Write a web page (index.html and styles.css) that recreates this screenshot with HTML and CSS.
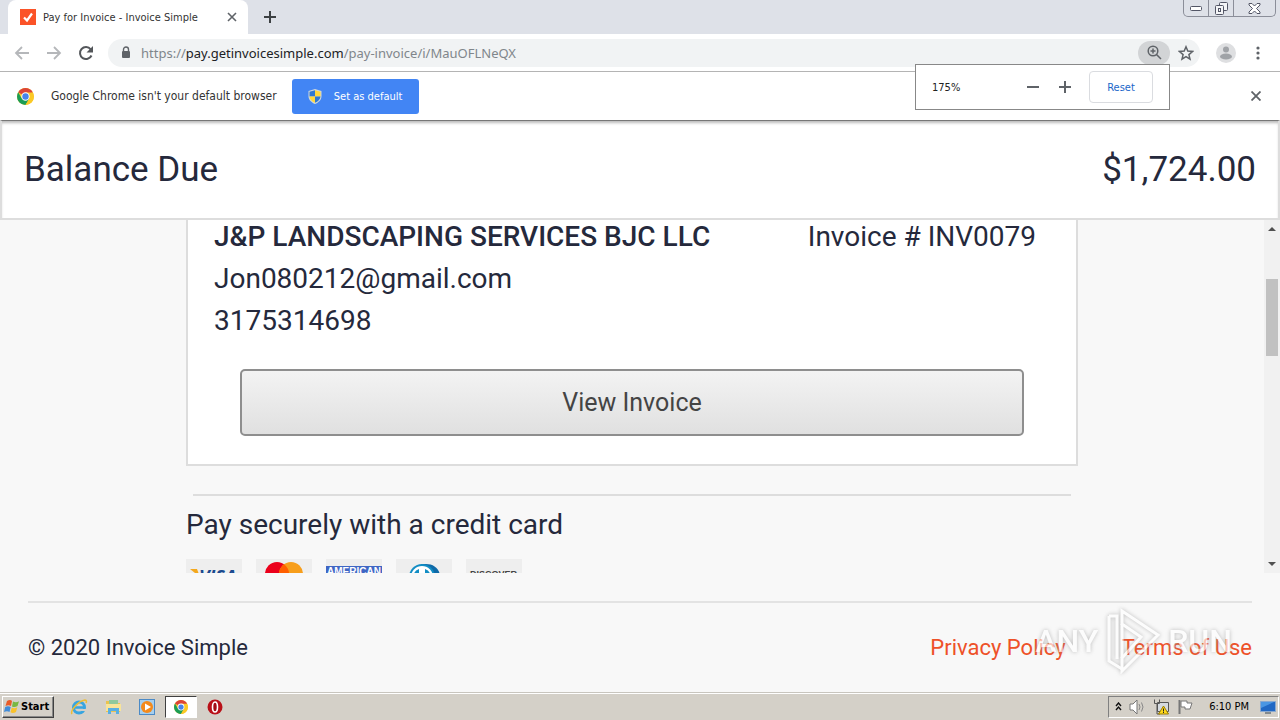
FILE: index.html
```html
<!DOCTYPE html>
<html lang="en">
<head>
    <meta charset="UTF-8">
    <meta name="viewport" content="width=device-width, initial-scale=1.0">
    <title>Pay for Invoice - Invoice Simple</title>
    <link rel="stylesheet" href="styles.css">
</head>
<body>
    <!-- shared logo -->
    <svg class="defs" width="0" height="0" aria-hidden="true">
        <symbol id="chrome" viewBox="0 0 16 16">
            <circle cx="8" cy="8" r="8" fill="#fbc926"/>
            <path d="M8 8L1.1 4A8 8 0 0 1 14.9 4z" fill="#dc4437"/>
            <path d="M8 8L4.6 10 1.1 4A8 8 0 0 0 8 16l3.5-6z" fill="#1b9d55"/>
            <path d="M8 4.200h6.900A8 8 0 0 1 8 16l3.500-6z" fill="#fbc926"/>
            <circle cx="8" cy="8" r="3.900" fill="#fff"/>
            <circle cx="8" cy="8" r="3" fill="#4683ea"/>
        </symbol>
    </svg>

    <div class="tabs">
        <div class="tab">
            <svg width="16" height="16" viewBox="0 0 16 16"><path d="M0 0h16v16H0z" fill="#fb5328"/><path d="M4 8.500l3 3 5-7" fill="none" stroke="#fff" stroke-width="2.200"/></svg>
            <span class="tab-title">Pay for Invoice - Invoice Simple</span>
            <button class="icon-btn" aria-label="Close tab"><svg width="10" height="10" viewBox="0 0 10 10"><path d="M1 1l8 8M9 1L1 9" stroke="#5f6368" stroke-width="1.600"/></svg></button>
        </div>
        <button class="icon-btn new-tab" aria-label="New tab"><svg width="12" height="12" viewBox="0 0 12 12"><path d="M6 0v12M0 6h12" stroke="#3c4043" stroke-width="2"/></svg></button>
        <div class="win">
            <button aria-label="Minimize"><svg width="12" height="5" viewBox="0 0 12 5"><rect x=".5" y=".5" width="11" height="4" rx="1" fill="#fff" stroke="#535666"/></svg></button>
            <button aria-label="Restore"><svg width="13" height="13" viewBox="0 0 13 13" fill="#f4f5f7" stroke="#535666"><rect x="4.500" y=".5" width="8" height="8" rx="1"/><rect x=".5" y="3.500" width="8" height="9" rx="1"/><rect x="3.500" y="6.500" width="2" height="3"/></svg></button>
            <button class="win-close" aria-label="Close"><svg width="13" height="11" viewBox="0 0 13 11"><path d="M1 .5h3l2.500 2.500L9 .5h3v1.500L8.500 5.500 12 9v1.500H9L6.500 8 4 10.500H1V9l3.500-3.500L1 2z" fill="#fff" stroke="#535666"/></svg></button>
        </div>
    </div>

    <div class="toolbar">
        <button class="icon-btn" aria-label="Back"><svg width="16" height="14" viewBox="0 0 16 14"><path d="M15 7H2M8 1L2 7l6 6" fill="none" stroke="#b5b7ba" stroke-width="1.800"/></svg></button>
        <button class="icon-btn" aria-label="Forward"><svg width="16" height="14" viewBox="0 0 16 14"><path d="M1 7h13M8 1l6 6-6 6" fill="none" stroke="#b5b7ba" stroke-width="1.800"/></svg></button>
        <button class="icon-btn" aria-label="Reload"><svg width="16" height="16" viewBox="0 0 16 16"><path d="M13.500 10.500a6 6 0 1 1-.8-6.200" fill="none" stroke="#54575b" stroke-width="2"/><path d="M15 1v6.500H8.500z" fill="#54575b"/></svg></button>
        <div class="address">
            <svg width="10" height="13" viewBox="0 0 10 13"><rect x="1" y="5" width="8" height="7" rx="1" fill="#5f6368"/><path d="M2.500 5V3.500a2.500 2.500 0 0 1 5 0V5" fill="none" stroke="#5f6368" stroke-width="1.400"/></svg>
            <div class="url">https://<b>pay.getinvoicesimple.com</b>/pay-invoice/i/MauOFLNeQX</div>
            <button class="zoom-btn" aria-label="Zoom"><svg width="15" height="15" viewBox="0 0 15 15" fill="none" stroke="#5f6368" stroke-width="1.500"><circle cx="6" cy="6" r="4.800"/><path d="M9.500 9.500L14 14M3.500 6h5M6 3.500v5"/></svg></button>
            <button class="icon-btn" aria-label="Bookmark this page"><svg width="16" height="16" viewBox="0 0 16 16"><path d="M8 1.800l1.800 4.300 4.700.4-3.600 3.100 1.100 4.600L8 11.700l-4 2.500 1.100-4.600-3.600-3.100 4.700-.4z" fill="none" stroke="#5f6368" stroke-width="1.500"/></svg></button>
        </div>
        <button class="icon-btn" aria-label="Profile"><svg width="20" height="20" viewBox="0 0 20 20"><circle cx="10" cy="10" r="10" fill="#dedfe1"/><circle cx="10" cy="6.500" r="3" fill="#a0a3a7"/><ellipse cx="10" cy="13.500" rx="6" ry="3" fill="#a0a3a7"/></svg></button>
        <button class="icon-btn menu" aria-label="Menu"><svg width="4" height="14" viewBox="0 0 4 14" fill="#5f6368"><circle cx="2" cy="2" r="1.600"/><circle cx="2" cy="7" r="1.600"/><circle cx="2" cy="12" r="1.600"/></svg></button>
        <div class="zoom-popup">
            <span class="zoom-value">175%</span>
            <button class="icon-btn" aria-label="Zoom out"><svg width="12" height="12" viewBox="0 0 12 12"><path d="M0 6h12" stroke="#5f6368" stroke-width="2"/></svg></button>
            <button class="icon-btn" aria-label="Zoom in"><svg width="12" height="12" viewBox="0 0 12 12"><path d="M0 6h12M6 0v12" stroke="#5f6368" stroke-width="2"/></svg></button>
            <button class="reset">Reset</button>
        </div>
    </div>

    <div class="infobar">
        <svg width="17" height="17"><use href="#chrome"/></svg>
        <span>Google Chrome isn't your default browser</span>
        <button class="set-default">
            <svg width="14" height="15" viewBox="0 0 14 15"><path d="M7 0l6.500 2v5c0 4-3 6.500-6.500 8C3.500 13.500.5 11 .5 7V2z" fill="#cfd8dc"/><path d="M7 1.200L1.500 2.800V7.500H7z" fill="#2e78d2"/><path d="M7 1.200l5.500 1.600v4.700H7z" fill="#ffd83b"/><path d="M1.500 7.500H7v6.300C4 12.500 1.800 10.500 1.500 7.500z" fill="#ffd83b"/><path d="M12.500 7.500H7v6.300c3-1.300 5.200-3.300 5.500-6.300z" fill="#2e78d2"/></svg>
            Set as default
        </button>
        <button class="icon-btn info-close" aria-label="Dismiss"><svg width="10" height="10" viewBox="0 0 10 10"><path d="M0.500 0.500l9 9M9.500 0.500l-9 9" stroke="#5f6368" stroke-width="1.800"/></svg></button>
    </div>

    <header class="balance">
        <span>Balance Due</span>
        <span>$1,724.00</span>
    </header>

    <main class="viewport">
        <div class="content">
            <section class="card">
                <div class="card-row">
                    <strong>J&amp;P LANDSCAPING SERVICES BJC LLC</strong>
                    <span>Invoice # INV0079</span>
                </div>
                <div>Jon080212@gmail.com</div>
                <div>3175314698</div>
                <button class="view-invoice">View Invoice</button>
            </section>
            <hr class="divider">
            <div>Pay securely with a credit card</div>
            <div class="brands">
                <svg viewBox="0 0 56 36"><path d="M0 0h56v36H0z" fill="#eee"/><path d="M4 10h7l3 8z" fill="#f4a81d"/><text x="13" y="24" class="visa">VISA</text></svg>
                <svg viewBox="0 0 56 36"><path d="M0 0h56v36H0z" fill="#eee"/><circle cx="21" cy="15" r="12" fill="#eb001b"/><circle cx="35" cy="15" r="12" fill="#f79e1b"/><path d="M28 5.200a12 12 0 0 1 0 19.600 12 12 0 0 1 0-19.600z" fill="#ff5f00"/></svg>
                <svg viewBox="0 0 56 36"><path d="M0 0h56v36H0z" fill="#eee"/><path d="M0 7h56v23H0z" fill="#3f66c4"/><text x="1" y="16" class="amex">AMERICAN</text></svg>
                <svg viewBox="0 0 56 36"><path d="M0 0h56v36H0z" fill="#eee"/><path d="M25 5h5c8 0 14 5 14 13s-6 13-14 13h-5z" fill="#0f6aa8"/><circle cx="26" cy="18" r="13" fill="#128dc4"/><circle cx="26" cy="18" r="11" fill="#fff"/><path d="M23 10v16a8.500 8.500 0 0 1 0-16zM29 10v16a8.500 8.500 0 0 0 0-16z" fill="#128dc4"/></svg>
                <svg viewBox="0 0 56 36"><path d="M0 0h56v36H0z" fill="#eee"/><text x="4" y="18" class="discover">DISCOVER</text></svg>
            </div>
        </div>
        <div class="scrollbar">
            <svg width="8" height="4" viewBox="0 0 8 4"><path d="M0 4l4-4 4 4z" fill="#505050"/></svg>
            <div class="thumb"></div>
            <svg class="down" width="8" height="4" viewBox="0 0 8 4"><path d="M0 0l4 4 4-4z" fill="#505050"/></svg>
        </div>
    </main>

    <footer class="footer">
        <span>© 2020 Invoice Simple</span>
        <nav>
            <a href="#">Privacy Policy</a>
            <a href="#">Terms of Use</a>
        </nav>
        <div class="watermark">
            <span>ANY</span>
            <svg width="58" height="66" viewBox="0 0 58 66" fill="none" stroke="#fff" stroke-width="3"><path d="M18 3l36 24-36 36V50l19-21-19-13z"/><path d="M18 16v34M5 8v45l13 8M5 8h8v43"/></svg>
            <span>RUN</span>
        </div>
    </footer>

    <div class="taskbar">
        <button class="start">
            <svg width="16" height="15" viewBox="0 0 16 15"><path d="M3 2c2-1.500 4-1.500 5 0L7 7C5.500 6 3.500 6 1.500 7z" fill="#e95b28"/><path d="M9 2.500c2 1 4 1 6-.3L13.500 7c-2 1.300-4 1.200-5.500.4z" fill="#79b842"/><path d="M1.200 8c2-1.300 4-1 5.500 0l-1.200 5C4 12 2 12 0 13z" fill="#418cd9"/><path d="M7.800 8.500c1.500 1 3.500 1 5.500-.2L12 13c-2 1.300-4 1.300-5.500.3z" fill="#f9c22b"/></svg>
            Start
        </button>
        <button class="task" aria-label="Internet Explorer"><svg width="18" height="18" viewBox="0 0 18 18" fill="none"><circle cx="9" cy="9.500" r="5.500" stroke="#38a5e0" stroke-width="3"/><path d="M5 9.500h9" stroke="#38a5e0" stroke-width="2.500"/><path d="M11 12h6" stroke="#d4d0c8" stroke-width="2"/><path d="M2 16C0 13 8 3 15 2c2 0 1.500 2 1 3" stroke="#edbd35" stroke-width="1.500"/></svg></button>
        <button class="task" aria-label="Explorer"><svg width="17" height="16" viewBox="0 0 17 16"><path d="M1 2h5l1 2h8v9H1z" fill="#e9c34f"/><path d="M4 1h9v5H4z" fill="#8fc99c"/><path d="M1 5h15v7H1z" fill="#f8e499"/><path d="M3 15V9h11v6h-3v-3H6v3z" fill="#59afe2"/></svg></button>
        <button class="task" aria-label="Media Player"><svg width="16" height="16" viewBox="0 0 16 16"><rect x=".5" y=".5" width="15" height="15" fill="#a6cfee" stroke="#4b8ac6"/><circle cx="8" cy="8" r="6" fill="#f48a1b"/><path d="M6 4.500l6 3.500-6 3.500z" fill="#fff"/></svg></button>
        <button class="task active" aria-label="Google Chrome"><svg width="14" height="14"><use href="#chrome"/></svg></button>
        <button class="task" aria-label="Opera"><svg width="16" height="16" viewBox="0 0 16 16"><circle cx="8" cy="8" r="7.500" fill="#b91018"/><ellipse cx="8" cy="8" rx="2.500" ry="5" fill="#a30c14" stroke="#fff" stroke-width="1.600"/></svg></button>
        <div class="tray">
            <svg width="7" height="9" viewBox="0 0 7 9"><path d="M1 4l2.500-3L6 4M1 8l2.500-3L6 8" fill="none" stroke="#111" stroke-width="1.400"/></svg>
            <svg width="17" height="16" viewBox="0 0 17 16"><path d="M1 5h3l4-4v14l-4-4H1z" fill="#fff" stroke="#777"/><path d="M10 5q2 3 0 6M12.500 3.500q3 4.500 0 9" fill="none" stroke="#888"/></svg>
            <svg width="17" height="16" viewBox="0 0 17 16"><path d="M4.500 3.500h11v9h-11z" fill="#d5dae0" stroke="#555"/><path d="M1.500.5v4h5v-4M4 4.500V15h3" fill="none" stroke="#555"/><path d="M10.500 7l5 8h-10z" fill="#ffd91c" stroke="#9a7d00"/><path d="M10.500 9.500v3M10.500 13v1" stroke="#222"/></svg>
            <svg width="17" height="16" viewBox="0 0 17 16"><path d="M2.500 1v14" stroke="#777" stroke-width="2"/><path d="M4 2h6v2h5l-2 6H8V8H4z" fill="#fff" stroke="#777"/></svg>
            <span class="clock">6:10 PM</span>
            <svg width="16" height="14" viewBox="0 0 16 14"><path d="M.5 1.500h15v10H.5z" fill="#2168c4" stroke="#89a8cf"/><path d="M1 2h13L1 8z" fill="#4a96e3"/><path d="M5 13h6" stroke="#345"/></svg>
        </div>
    </div>
</body>
</html>
```
FILE: styles.css
```css
* {
    box-sizing: border-box;
}
body {
    margin: 0;
    height: 100vh;
    display: flex;
    flex-direction: column;
    overflow: hidden;
    background-color: #f8f8f8;
    font-family: "DejaVu Sans Condensed", "Noto Sans", sans-serif;
    font-size: 11px;
    color: #333;
}
button {
    font: inherit;
    color: inherit;
    padding: 0;
    border: none;
    background: none;
}
svg {
    display: block;
    flex: none;
}
.defs {
    position: absolute;
}
.icon-btn {
    display: flex;
    align-items: center;
    justify-content: center;
}

/* tab strip */
.tabs {
    display: flex;
    height: 34px;
    padding-left: 8px;
    background-color: #dee1e8;
}
.tab {
    display: flex;
    align-items: center;
    width: 240px;
    padding: 0 11px 0 12px;
    gap: 7px;
    background-color: #fff;
    border-radius: 8px 8px 0 0;
}
.tab-title {
    flex: 1;
    white-space: nowrap;
}
.new-tab {
    margin-left: 16px;
}
.win {
    display: flex;
    height: 17px;
    margin: 0 4px 0 auto;
    border: 1px solid #8b8e99;
    border-top: none;
    border-radius: 0 0 5px 5px;
}
.win button {
    display: flex;
    align-items: center;
    justify-content: center;
    width: 25px;
    border-right: 1px solid #8b8e99;
}
.win .win-close {
    width: 41px;
    border-right: none;
}

/* toolbar */
.toolbar {
    position: relative;
    display: flex;
    align-items: center;
    height: 38px;
    gap: 16px;
    padding: 0 20px 0 14px;
    background-color: #fff;
    border-bottom: 1px solid #b4b4b4;
}
.address {
    flex: 1;
    display: flex;
    align-items: center;
    height: 28px;
    margin-left: -2px;
    padding: 0 6px 0 13px;
    border-radius: 14px;
    background-color: #f1f3f4;
}
.url {
    flex: 1;
    margin-left: 10px;
    font-family: "Noto Sans", sans-serif;
    font-size: 13px;
    color: #80868b;
}
.url b {
    font-weight: normal;
    color: #202124;
}
.zoom-btn {
    display: flex;
    align-items: center;
    justify-content: center;
    width: 32px;
    height: 24px;
    margin-right: 8px;
    border-radius: 12px;
    background-color: #d2d4d6;
}
.menu {
    margin-left: 4px;
}
.zoom-popup {
    position: absolute;
    top: 30px;
    right: 110px;
    z-index: 2;
    display: flex;
    align-items: center;
    gap: 20px;
    width: 255px;
    height: 46px;
    padding: 0 16px;
    border: 1px solid #888;
    background-color: #fff;
}
.zoom-value {
    flex: 1;
    color: #222;
}
.reset {
    width: 64px;
    height: 32px;
    margin-left: -2px;
    border: 1px solid #dadce0;
    border-radius: 4px;
    color: #1a67c9;
}

/* default browser bar */
.infobar {
    display: flex;
    align-items: center;
    height: 48px;
    padding: 0 19px 0 17px;
    gap: 17px;
    background-color: #fff;
    font-size: 12px;
}
.set-default {
    display: flex;
    align-items: center;
    justify-content: center;
    gap: 12px;
    width: 127px;
    height: 35px;
    margin-left: -2px;
    border-radius: 3px;
    background-color: #4285f4;
    color: #fff;
    font-size: 11px;
}
.info-close {
    margin-left: auto;
}

/* page */
.balance,
.viewport,
.footer {
    font-family: Roboto, sans-serif;
    color: #25293c;
}
.balance {
    display: flex;
    justify-content: space-between;
    align-items: center;
    height: 100px;
    padding: 0 22px;
    border: 2px solid #ddd;
    border-top: 1px solid #777;
    background-color: #fff;
    box-shadow: inset 0 3px 3px -1px #bbb;
    font-size: 35px;
}
.viewport {
    flex: 1;
    min-height: 0;
    display: flex;
    overflow: hidden;
    font-size: 28px;
    line-height: 42px;
}
.content {
    flex: 1;
    max-width: 892px;
    margin: -34px auto 0;
}
.card {
    padding: 28px 26px;
    border: 2px solid #ddd;
    background-color: #fff;
}
.card-row {
    display: flex;
    justify-content: space-between;
    padding-right: 14px;
}
.card strong {
    font-weight: 500;
}
.view-invoice {
    display: block;
    width: calc(100% - 52px);
    height: 67px;
    margin: 27px auto 0;
    border: 2px solid #8e8e8e;
    border-radius: 5px;
    background: linear-gradient(#f3f3f3, #e0e0e0);
    color: #444;
    font-size: 25px;
}
.divider {
    height: 2px;
    margin: 28px 7px 8px;
    border: none;
    background-color: #ddd;
}
.brands {
    display: flex;
    gap: 14px;
    margin-top: 13px;
}
.brands svg {
    width: 56px;
    height: 36px;
}
.visa {
    font: italic bold 18px "Open Sans", sans-serif;
    fill: #1a4a8f;
}
.amex {
    font: bold 10px "Liberation Sans", sans-serif;
    fill: #fff;
}
.discover {
    font: bold 9px "Liberation Sans", sans-serif;
    fill: #444;
}
.scrollbar {
    display: flex;
    flex-direction: column;
    align-items: center;
    width: 16px;
    padding: 7px 0;
    background-color: #f1f1f1;
}
.thumb {
    width: 12px;
    height: 77px;
    margin-top: 48px;
    background-color: #c1c1c1;
}
.down {
    margin-top: auto;
}
.footer {
    position: relative;
    display: flex;
    justify-content: space-between;
    margin: 28px 28px 0;
    padding: 28px 0;
    border-top: 2px solid #e3e3e3;
    font-size: 22px;
    line-height: 33px;
}
.footer nav {
    display: flex;
    gap: 56px;
}
.footer a {
    color: #ee5128;
    text-decoration: none;
}
.watermark {
    position: absolute;
    right: 20px;
    top: 5px;
    display: flex;
    align-items: center;
    gap: 6px;
    color: #fff;
    font: 500 32px Roboto, sans-serif;
    opacity: 0.65;
    filter: drop-shadow(0 0 2px #999);
    pointer-events: none;
}

/* taskbar */
.taskbar {
    display: flex;
    align-items: center;
    height: 28px;
    padding: 0 1px 0 2px;
    background-color: #d4d0c8;
    border-top: 1px solid #c8c5be;
    box-shadow: inset 0 1px #fff;
    color: #000;
}
.start {
    display: flex;
    align-items: center;
    gap: 1px;
    width: 52px;
    height: 22px;
    margin-right: 9px;
    padding-left: 1px;
    border: 1px solid;
    border-color: #fff #404040 #404040 #fff;
    box-shadow: inset -1px -1px #888;
    font-weight: bold;
    font-size: 11px;
}
.task {
    display: flex;
    align-items: center;
    justify-content: center;
    width: 32px;
    height: 22px;
    margin-right: 2px;
}
.task.active {
    border: 1px solid;
    border-color: #404040 #fff #fff #404040;
    background-color: #fff;
}
.tray {
    display: flex;
    align-items: center;
    height: 22px;
    margin-left: auto;
    padding: 0 2px 0 6px;
    gap: 7px;
    border: 1px solid;
    border-color: #808080 #fff #fff #808080;
}
.clock {
    margin: 0 4px 0 8px;
}
```
